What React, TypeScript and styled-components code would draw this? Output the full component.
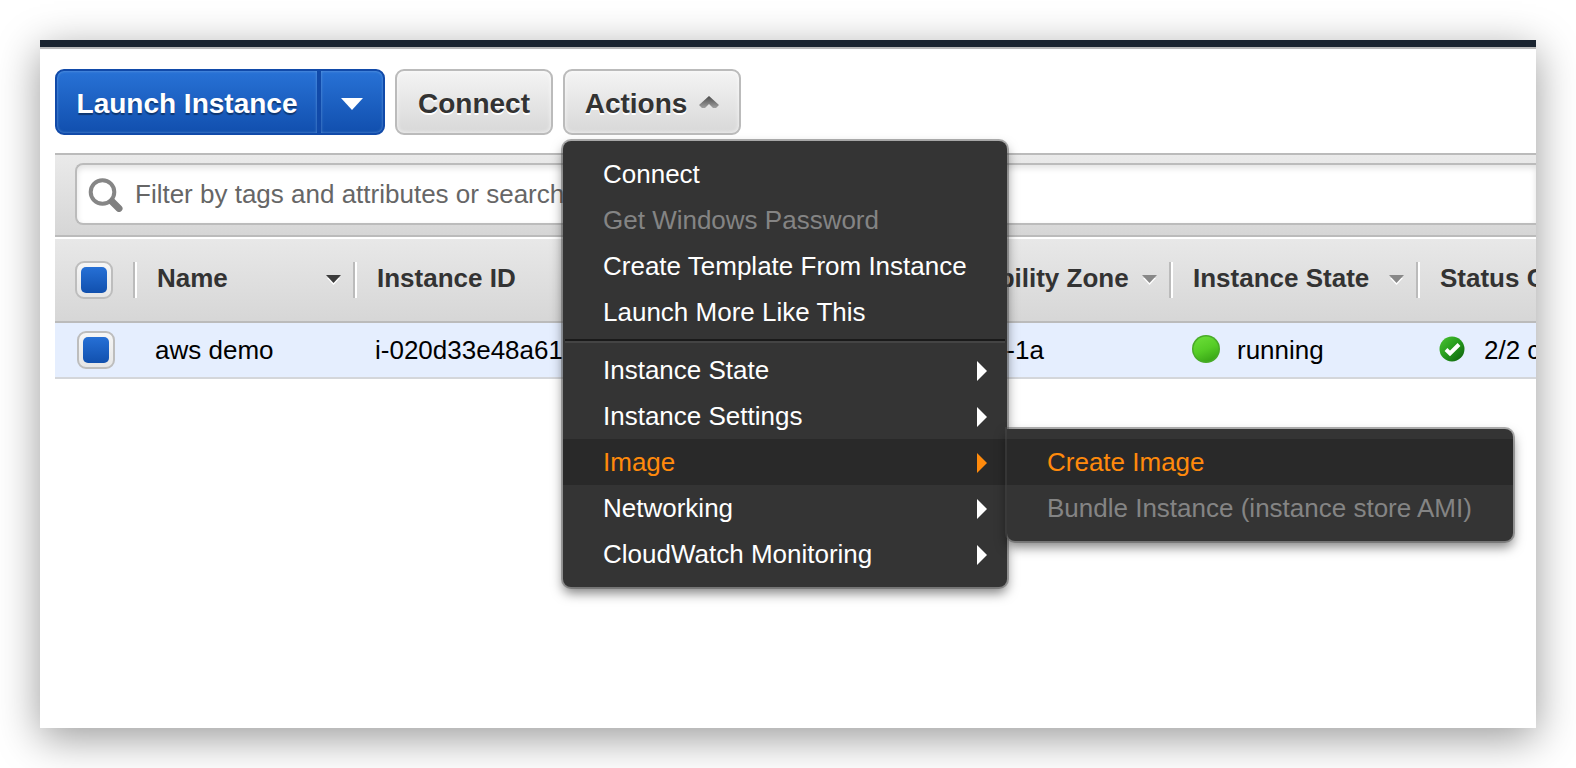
import React from "react";
import styled, { createGlobalStyle, css } from "styled-components";

const GlobalStyle = createGlobalStyle`
  *, *::before, *::after { box-sizing: border-box; }
  body {
    margin: 0;
    background: #fff;
    font-family: "Liberation Sans", Arial, sans-serif;
    font-size: 26px;
    color: #000;
  }
  button, input { font: inherit; }
`;

const Page = styled.div`
  min-height: 100vh;
  padding: 40px;
  display: flex;
`;

const Window = styled.main`
  flex: 1;
  min-width: 0;
  overflow: hidden;
  background: #fff;
  box-shadow: 0 10px 40px rgba(0, 0, 0, 0.4);
`;

const TopBar = styled.div`
  height: 9px;
  background: #1a2430;
  border-bottom: 2px solid #bababa;
`;

const Content = styled.div`
  padding: 20px 0 0 15px;
`;

const Toolbar = styled.div`
  display: flex;
  gap: 10px;
  margin-bottom: 18px;
`;

const ButtonGroup = styled.div`
  display: flex;
`;

const baseButton = css`
  height: 66px;
  display: flex;
  align-items: center;
  justify-content: center;
  padding: 3px 0 0;
  font-weight: 700;
  font-size: 28px;
  line-height: 32px;
  border-radius: 9px;
  white-space: nowrap;
  cursor: pointer;
`;

const PrimaryButton = styled.button<{ $side: "left" | "right" }>`
  ${baseButton}
  color: #fff;
  border: 2px solid #114aa9;
  background: linear-gradient(#2872d6, #114fae);
  box-shadow: inset 0 0 3px rgba(130, 180, 230, 0.7);
  text-shadow: 0 2px 1px rgba(0, 0, 0, 0.4);
  ${({ $side }) =>
    $side === "left"
      ? css`
          width: 264px;
          border-radius: 9px 0 0 9px;
        `
      : css`
          width: 66px;
          border-radius: 0 9px 9px 0;
        `}
`;

const GreyButton = styled.button<{ $width: number }>`
  ${baseButton}
  width: ${({ $width }) => $width}px;
  gap: 12px;
  color: #333;
  border: 2px solid #bbb;
  background: linear-gradient(#f4f4f4, #d8d8d8);
  box-shadow: inset 0 0 4px rgba(255, 255, 255, 0.8);
  text-shadow: 0 2px 0 #fff;
`;

const MenuAnchor = styled.div`
  position: relative;
`;

const menuPanel = css`
  position: absolute;
  margin: 0;
  padding: 10px 0;
  list-style: none;
  background: #343434;
  box-shadow: 0 0 0 2px rgba(80, 80, 80, 0.45), 0 6px 12px rgba(0, 0, 0, 0.5);
`;

const Menu = styled.ul`
  ${menuPanel}
  top: 72px;
  left: 0;
  width: 444px;
  border-radius: 8px;
  z-index: 2;
`;

const SubMenu = styled.ul`
  ${menuPanel}
  top: -10px;
  left: 100%;
  width: 506px;
  border-radius: 0 8px 8px 8px;
`;

const MenuEntry = styled.li`
  position: relative;
`;

const MenuButton = styled.button<{ $active?: boolean }>`
  width: 100%;
  height: 46px;
  padding: 0 20px 0 40px;
  display: flex;
  align-items: center;
  justify-content: space-between;
  border: 0;
  text-align: left;
  white-space: nowrap;
  background: ${({ $active }) => ($active ? "#292929" : "transparent")};
  color: ${({ $active }) => ($active ? "#ff8a0c" : "#fff")};
  cursor: pointer;

  &:disabled {
    color: #848484;
    cursor: default;
  }
`;

const MenuDivider = styled.li`
  height: 4px;
  margin: 4px 2px;
  background: linear-gradient(#1a1a1a 50%, #444 50%);
`;

const FilterBar = styled.div`
  padding: 8px 0 10px 20px;
  border-top: 2px solid #bbb;
  border-bottom: 2px solid #bbb;
  background: linear-gradient(#eaeaea, #d6d6d6);
`;

const SearchBox = styled.label`
  height: 62px;
  display: flex;
  align-items: center;
  gap: 11px;
  padding-left: 11px;
  border: 2px solid #bbb;
  border-right: 0;
  border-radius: 8px 0 0 8px;
  background: #fff;
  box-shadow: inset 0 3px 6px rgba(0, 0, 0, 0.12);
`;

const SearchInput = styled.input`
  flex: 1;
  min-width: 0;
  padding: 0;
  border: 0;
  outline: 0;
  background: transparent;

  &::placeholder {
    color: #666;
    opacity: 1;
  }
`;

const Table = styled.table`
  width: 1669px;
  table-layout: fixed;
  border-collapse: separate;
  border-spacing: 0;
  margin-top: 2px;
`;

const HeadRow = styled.tr`
  height: 84px;
  background: linear-gradient(#e8e8e8, #d6d6d6);
`;

const HeadCell = styled.th`
  padding: 0;
  text-align: left;
  white-space: nowrap;
  color: #333;
  border-bottom: 2px solid #bbb;
`;

const HeadInner = styled.div`
  height: 36px;
  display: flex;
  align-items: center;
  justify-content: space-between;
  padding: 0 12px 4px 22px;
  border-left: 2px solid #bbb;
  box-shadow: inset 2px 0 0 #fff;
`;

const BodyRow = styled.tr`
  height: 56px;
  background: #e5eefe;
`;

const BodyCell = styled.td`
  padding: 0 0 0 22px;
  overflow: hidden;
  white-space: nowrap;
  border-bottom: 2px solid #d4d6da;
`;

const IconText = styled.span`
  display: flex;
  align-items: center;
  gap: 16px;
`;

const CheckBox = styled.input`
  appearance: none;
  display: block;
  flex: none;
  width: 38px;
  height: 38px;
  margin: 0;
  padding: 4px;
  border: 2px solid #bdbdbd;
  border-radius: 9px;
  background: linear-gradient(#f6f6f6, #e6e6e6);

  &:checked::before {
    content: "";
    display: block;
    width: 26px;
    height: 26px;
    border-radius: 5px;
    background: linear-gradient(#2670d6, #1150ae);
  }
`;

const HeadCheck = styled.div`
  padding-left: 20px;
`;

const SearchIcon = () => (
  <svg width="36" height="36" viewBox="0 0 36 36" aria-hidden="true">
    <circle cx="14.5" cy="16" r="11.8" fill="none" stroke="#868686" strokeWidth="4" />
    <path d="M24 25.5L31 32.5" stroke="#808080" strokeWidth="7" strokeLinecap="round" />
  </svg>
);

const DownTriangle = () => (
  <svg width="22" height="12" viewBox="0 0 22 12" aria-hidden="true">
    <path d="M0 0H22L11 12Z" fill="#fff" />
  </svg>
);

const UpCaret = () => (
  <svg width="20" height="20" viewBox="0 0 20 20" aria-hidden="true">
    <defs>
      <linearGradient id="caret" x1="0" y1="0" x2="0" y2="1">
        <stop offset="0" stopColor="#4a4a4a" />
        <stop offset="1" stopColor="#a0a0a0" />
      </linearGradient>
    </defs>
    <path d="M10 2L20 11L17 14H14L10 10L6 14H3L0 11Z" fill="url(#caret)" />
  </svg>
);

const SortCaret = ({ color }: { color: string }) => (
  <svg width="15" height="14" viewBox="0 0 15 14" aria-hidden="true">
    <path d="M1 7H14L7.5 14Z" fill="#fff" />
    <path d="M0 4H15L7.5 12Z" fill={color} />
  </svg>
);

const RightTriangle = () => (
  <svg width="10" height="22" viewBox="0 0 10 22" aria-hidden="true">
    <path d="M0 2L10 12L0 22Z" fill="currentColor" />
  </svg>
);

const RunningIcon = () => (
  <svg width="30" height="30" viewBox="0 0 30 30" aria-hidden="true">
    <defs>
      <linearGradient id="running" x1="0.3" y1="0" x2="0.7" y2="1">
        <stop offset="0" stopColor="#69dc36" />
        <stop offset="0.5" stopColor="#55cc26" />
        <stop offset="1" stopColor="#38a516" />
      </linearGradient>
    </defs>
    <circle cx="15" cy="14" r="14" fill="#48ab27" />
    <circle cx="15" cy="14" r="12.5" fill="url(#running)" />
  </svg>
);

const PassedIcon = () => (
  <svg width="30" height="30" viewBox="0 0 30 30" aria-hidden="true">
    <defs>
      <linearGradient id="passed" x1="0" y1="0" x2="1" y2="1">
        <stop offset="0" stopColor="#4cc431" />
        <stop offset="0.5" stopColor="#259a1c" />
        <stop offset="1" stopColor="#0e5c0d" />
      </linearGradient>
    </defs>
    <circle cx="14" cy="14" r="12.5" fill="url(#passed)" />
    <path d="M8 14.5L12 18.5L21 9.5" fill="none" stroke="#fff" strokeWidth="4" />
  </svg>
);

type Entry = { label: string; disabled?: boolean; active?: boolean; items?: Entry[] };

const primaryEntries: Entry[] = [
  { label: "Connect" },
  { label: "Get Windows Password", disabled: true },
  { label: "Create Template From Instance" },
  { label: "Launch More Like This" },
];

const groupEntries: Entry[] = [
  { label: "Instance State", items: [] },
  { label: "Instance Settings", items: [] },
  {
    label: "Image",
    active: true,
    items: [
      { label: "Create Image", active: true },
      { label: "Bundle Instance (instance store AMI)", disabled: true },
    ],
  },
  { label: "Networking", items: [] },
  { label: "CloudWatch Monitoring", items: [] },
];

const MenuItem = ({ entry }: { entry: Entry }) => (
  <MenuEntry role="none">
    <MenuButton
      type="button"
      role="menuitem"
      $active={entry.active}
      disabled={entry.disabled}
      aria-haspopup={entry.items ? "menu" : undefined}
    >
      {entry.label}
      {entry.items && <RightTriangle />}
    </MenuButton>
    {entry.active && entry.items && (
      <SubMenu role="menu" aria-label={entry.label}>
        {entry.items.map((item) => (
          <MenuItem key={item.label} entry={item} />
        ))}
      </SubMenu>
    )}
  </MenuEntry>
);

const columns = [
  { label: "Name", width: 220, caret: "#3c3c3c" },
  { label: "Instance ID", width: 546, caret: "#888" },
  { label: "Availability Zone", width: 270, caret: "#888" },
  { label: "Instance State", width: 247, caret: "#888" },
  { label: "Status Checks", width: 308, caret: "#888" },
];

export default function App() {
  return (
    <Page>
      <GlobalStyle />
      <Window>
        <TopBar />
        <Content>
          <Toolbar>
            <ButtonGroup>
              <PrimaryButton type="button" $side="left">
                Launch Instance
              </PrimaryButton>
              <PrimaryButton type="button" $side="right" aria-label="Launch options">
                <DownTriangle />
              </PrimaryButton>
            </ButtonGroup>
            <GreyButton type="button" $width={158}>
              Connect
            </GreyButton>
            <MenuAnchor>
              <GreyButton type="button" $width={178} aria-haspopup="menu" aria-expanded="true">
                Actions
                <UpCaret />
              </GreyButton>
              <Menu role="menu" aria-label="Actions">
                {primaryEntries.map((entry) => (
                  <MenuItem key={entry.label} entry={entry} />
                ))}
                <MenuDivider role="separator" />
                {groupEntries.map((entry) => (
                  <MenuItem key={entry.label} entry={entry} />
                ))}
              </Menu>
            </MenuAnchor>
          </Toolbar>
          <FilterBar>
            <SearchBox>
              <SearchIcon />
              <SearchInput
                type="text"
                aria-label="Filter instances"
                placeholder="Filter by tags and attributes or search by keyword"
              />
            </SearchBox>
          </FilterBar>
          <Table>
            <colgroup>
              <col style={{ width: 78 }} />
              {columns.map((column) => (
                <col key={column.label} style={{ width: column.width }} />
              ))}
            </colgroup>
            <thead>
              <HeadRow>
                <HeadCell>
                  <HeadCheck>
                    <CheckBox type="checkbox" defaultChecked aria-label="Select all instances" />
                  </HeadCheck>
                </HeadCell>
                {columns.map((column) => (
                  <HeadCell key={column.label}>
                    <HeadInner>
                      {column.label}
                      <SortCaret color={column.caret} />
                    </HeadInner>
                  </HeadCell>
                ))}
              </HeadRow>
            </thead>
            <tbody>
              <BodyRow>
                <BodyCell>
                  <CheckBox type="checkbox" defaultChecked aria-label="Select aws demo" />
                </BodyCell>
                <BodyCell>aws demo</BodyCell>
                <BodyCell>i-020d33e48a61</BodyCell>
                <BodyCell>us-east-1a</BodyCell>
                <BodyCell>
                  <IconText>
                    <RunningIcon />
                    running
                  </IconText>
                </BodyCell>
                <BodyCell>
                  <IconText>
                    <PassedIcon />
                    2/2 checks
                  </IconText>
                </BodyCell>
              </BodyRow>
            </tbody>
          </Table>
        </Content>
      </Window>
    </Page>
  );
}
